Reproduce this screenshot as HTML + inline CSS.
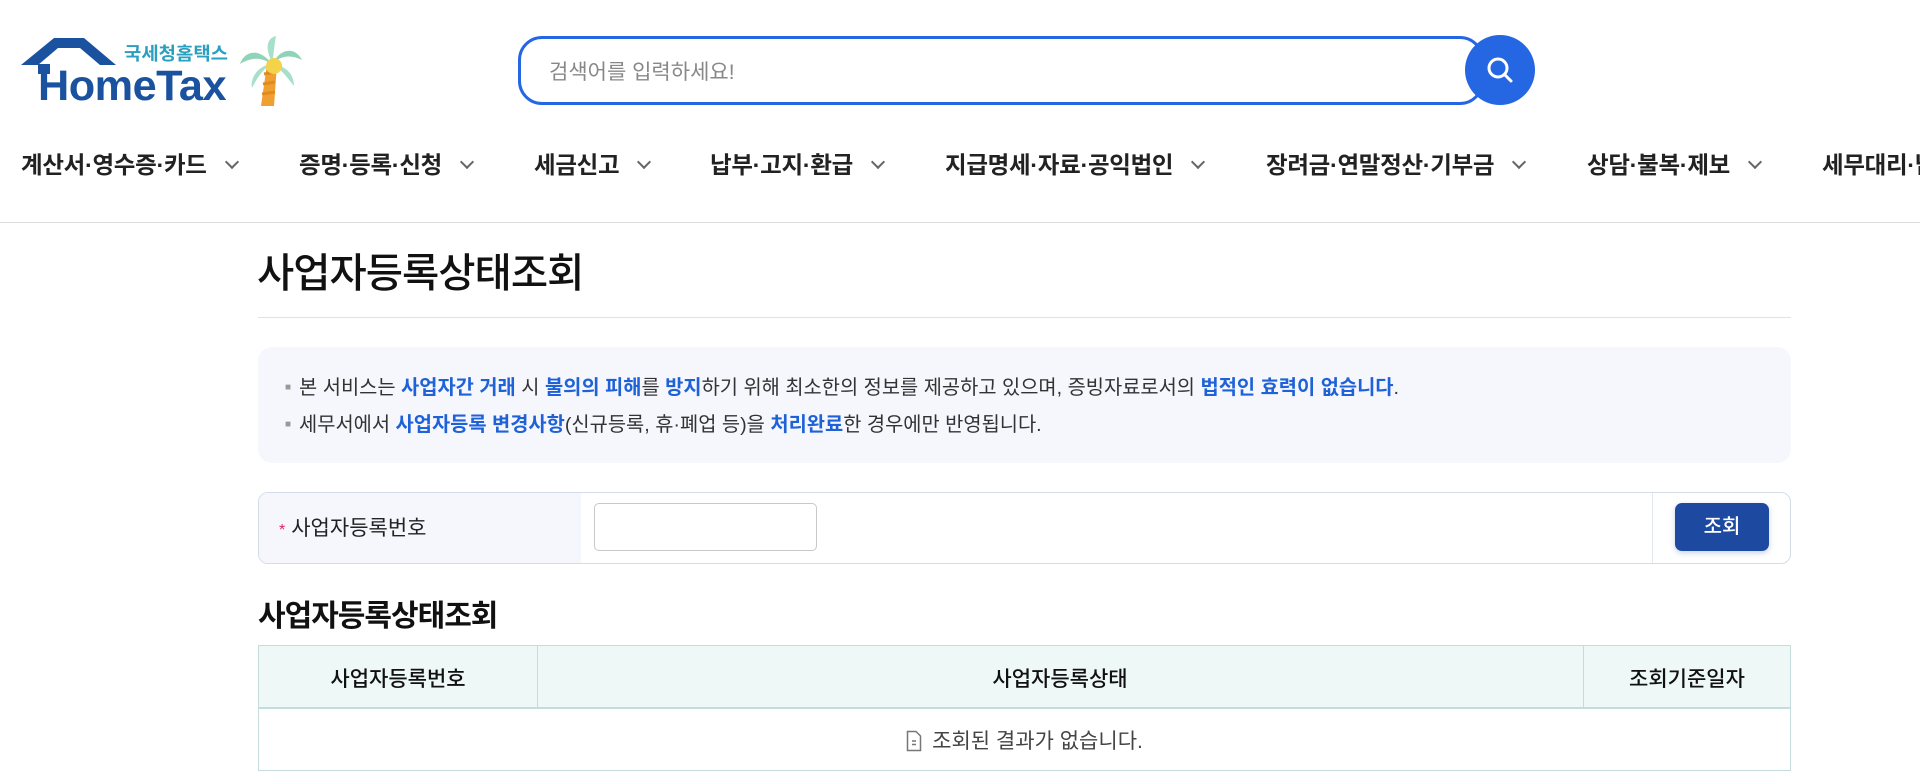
<!DOCTYPE html>
<html lang="ko"><head><meta charset="utf-8">
<style>
*{box-sizing:border-box;margin:0;padding:0}
body{width:1920px;height:784px;overflow:hidden;background:#fff;font-family:"Liberation Sans","Noto Sans CJK KR",sans-serif;color:#111;position:relative}
.abs{position:absolute}
.nav span.i{position:absolute;top:146px;font-size:23.5px;font-weight:700;color:#222;white-space:nowrap;letter-spacing:-0.3px}
.chev{display:inline-block;width:10px;height:10px;border-right:2px solid #666;border-bottom:2px solid #666;transform:rotate(45deg);margin-left:20px;position:relative;top:-6px}
.b{color:#1f62d8;font-weight:700}
</style></head><body>
<!-- logo -->
<svg class="abs" style="left:18px;top:34px" width="290" height="74" viewBox="0 0 290 74">
<path d="M3 31 L36 4 L66 4 L98 31 L82 31 L62 14 L40 14 L20 31 Z" fill="#1a52a0"/>
<rect x="20" y="30" width="12" height="10" fill="#1a52a0"/>
<text x="20" y="66" font-family="Liberation Sans,sans-serif" font-weight="700" font-size="43" fill="#1a52a0" letter-spacing="-0.5" textLength="188" lengthAdjust="spacingAndGlyphs">HomeTax</text>
<text x="106" y="26" font-family="Noto Sans CJK KR,sans-serif" font-weight="700" font-size="18" fill="#2a9fbf" textLength="104" lengthAdjust="spacingAndGlyphs">국세청홈택스</text>
<path d="M249 30 L259 30 L256 72 L243 72 Z" fill="#f0a030"/>
<path d="M246 40 L258 38 M245 50 L257 48 M244 60 L257 58" stroke="#e08a20" stroke-width="3"/>
<path d="M254 30 C240 12 226 18 222 30 C236 22 244 24 254 30 Z" fill="#8fd4b8"/>
<path d="M254 30 C264 12 278 14 284 26 C272 20 262 22 254 30 Z" fill="#8fd4b8"/>
<path d="M254 28 C246 12 250 4 258 2 C256 12 256 20 254 28 Z" fill="#a8dfc8"/>
<path d="M254 30 C238 32 232 46 234 54 C240 42 246 34 254 30 Z" fill="#a8dfc8"/>
<path d="M254 30 C270 32 276 42 276 52 C268 42 262 34 254 30 Z" fill="#a8dfc8"/>
<circle cx="256" cy="32" r="8" fill="#f3d34a"/>
</svg>
<!-- search -->
<div class="abs" style="left:518px;top:36px;width:966px;height:69px;border:3px solid #2566e3;border-radius:24px;"></div>
<div class="abs" style="left:549px;top:56px;font-size:21px;color:#888">검색어를 입력하세요!</div>
<div class="abs" style="left:1465px;top:35px;width:70px;height:70px;border-radius:50%;background:#2566e3"></div>
<svg class="abs" style="left:1482px;top:52px" width="36" height="36" viewBox="0 0 36 36"><circle cx="16" cy="16" r="9" fill="none" stroke="#fff" stroke-width="3"/><path d="M22.5 22.5 L29 29" stroke="#fff" stroke-width="3" stroke-linecap="round"/></svg>
<!-- nav -->
<div class="nav">
<span class="i" style="left:21px">계산서·영수증·카드<i class="chev"></i></span>
<span class="i" style="left:299px">증명·등록·신청<i class="chev"></i></span>
<span class="i" style="left:534px">세금신고<i class="chev"></i></span>
<span class="i" style="left:710px">납부·고지·환급<i class="chev"></i></span>
<span class="i" style="left:945px">지급명세·자료·공익법인<i class="chev"></i></span>
<span class="i" style="left:1266px">장려금·연말정산·기부금<i class="chev"></i></span>
<span class="i" style="left:1587px">상담·불복·제보<i class="chev"></i></span>
<span class="i" style="left:1822px">세무대리·납세관리</span>
</div>
<div class="abs" style="left:0;top:222px;width:1920px;height:1px;background:#ddd"></div>
<!-- title -->
<div class="abs" style="left:257px;top:240px;font-size:40.5px;font-weight:500;color:#111;letter-spacing:-1px">사업자등록상태조회</div>
<div class="abs" style="left:258px;top:317px;width:1533px;height:1px;background:#e2e2e2"></div>
<!-- info -->
<div class="abs" style="left:258px;top:347px;width:1533px;height:116px;background:#f5f7fc;border-radius:14px"></div>
<div class="abs" style="left:285px;top:370px;font-size:19.8px;color:#333;line-height:37px;white-space:nowrap">
<div><span style="color:#999;font-size:10px;line-height:10px;position:relative;top:-4px;margin-right:8px">■</span>본 서비스는 <span class="b">사업자간 거래</span> 시 <span class="b">불의의 피해</span>를 <span class="b">방지</span>하기 위해 최소한의 정보를 제공하고 있으며, 증빙자료로서의 <span class="b">법적인 효력이 없습니다</span>.</div>
<div><span style="color:#999;font-size:10px;line-height:10px;position:relative;top:-4px;margin-right:8px">■</span>세무서에서 <span class="b">사업자등록 변경사항</span>(신규등록, 휴·폐업 등)을 <span class="b">처리완료</span>한 경우에만 반영됩니다.</div>
</div>
<!-- form -->
<div class="abs" style="left:258px;top:492px;width:1533px;height:72px;border:1px solid #d3dde8;border-radius:10px;overflow:hidden;background:#fff">
<div style="position:absolute;left:0;top:0;width:322px;height:100%;background:#f5f7fc"></div>
<div style="position:absolute;left:1393px;top:0;width:1px;height:100%;background:#e3e8ee"></div>
</div>
<div class="abs" style="left:279px;top:512px;font-size:21px;color:#222"><span style="color:#e0245e;font-size:16px;margin-right:6px">*</span>사업자등록번호</div>
<div class="abs" style="left:594px;top:503px;width:223px;height:48px;border:1px solid #c8c8c8;border-radius:5px;background:#fff"></div>
<div class="abs" style="left:1675px;top:503px;width:94px;height:48px;background:#1d4aa0;border-radius:7px;color:#fff;font-size:20px;font-weight:500;text-align:center;line-height:48px;box-shadow:0 2px 6px rgba(30,70,160,.25)">조회</div>
<!-- subtitle -->
<div class="abs" style="left:258px;top:591px;font-size:30px;font-weight:700;color:#111;letter-spacing:-1px">사업자등록상태조회</div>
<!-- table -->
<div class="abs" style="left:258px;top:645px;width:1533px;height:126px;border:1px solid #c4dcdb;background:#fff">
<div style="position:absolute;left:0;top:0;width:100%;height:63px;background:#eef8f6;border-bottom:2px solid #c4dcdb"></div>
<div style="position:absolute;left:278px;top:0;width:1px;height:63px;background:#c4dcdb"></div>
<div style="position:absolute;left:1324px;top:0;width:1px;height:63px;background:#c4dcdb"></div>
<div style="position:absolute;left:0;top:17px;width:278px;text-align:center;font-size:21px;font-weight:500">사업자등록번호</div>
<div style="position:absolute;left:278px;top:17px;width:1046px;text-align:center;font-size:21px;font-weight:500">사업자등록상태</div>
<div style="position:absolute;left:1324px;top:17px;width:208px;text-align:center;font-size:21px;font-weight:500">조회기준일자</div>
<div style="position:absolute;left:0;top:79px;width:100%;text-align:center;font-size:21px;color:#444">
<svg width="16" height="22" viewBox="0 0 16 22" style="vertical-align:-4px;margin-right:10px"><path d="M1.5 1.5 H10 L14.5 6 V20.5 H1.5 Z" fill="none" stroke="#777" stroke-width="1.5"/><path d="M6 11 H10 M6 14.5 H10" stroke="#777" stroke-width="1.5"/></svg>조회된 결과가 없습니다.</div>
</div>
</body></html>
